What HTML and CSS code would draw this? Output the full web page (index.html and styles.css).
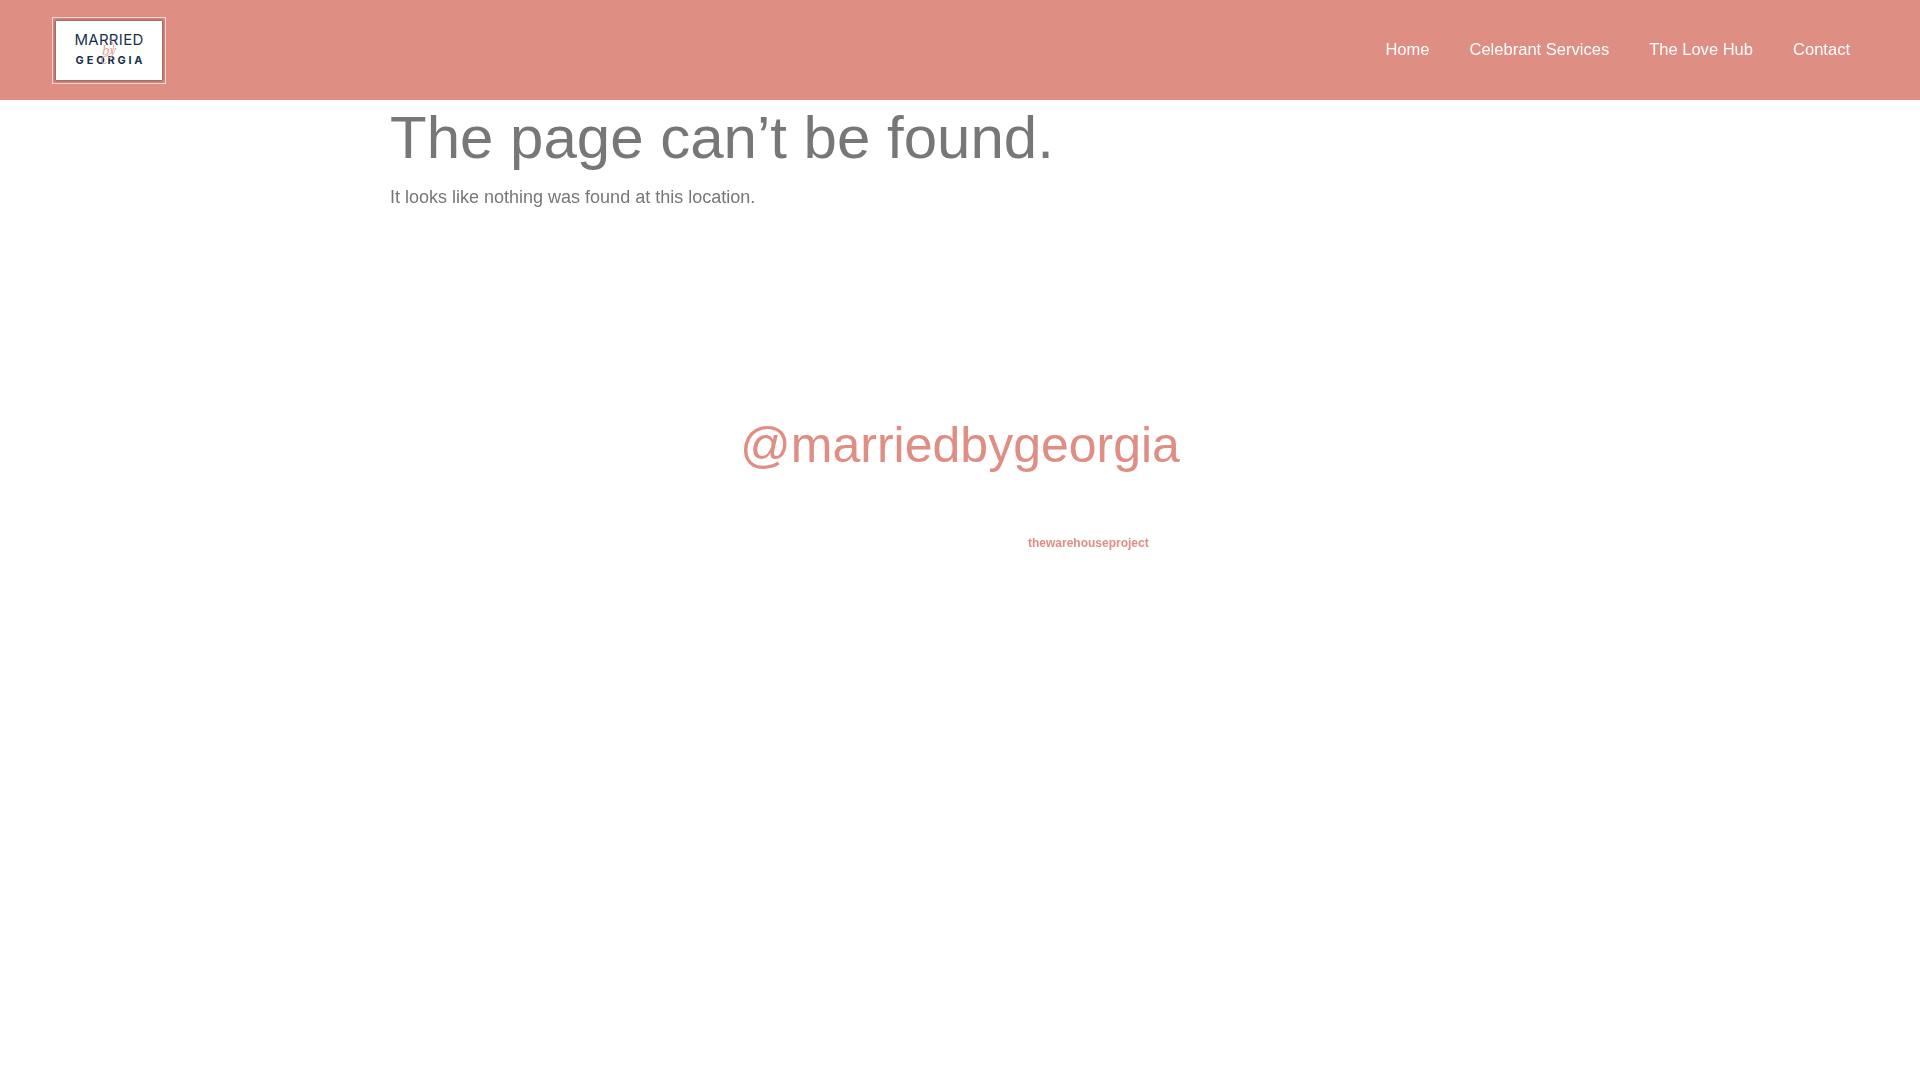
FILE: index.html
```html
<!DOCTYPE html>
<html lang="en">
<head>
<meta charset="utf-8">
<title>Page not found</title>
<link rel="stylesheet" href="styles.css">
</head>
<body>
<header class="site-header">
  <a class="logo" href="#">
    <span class="logo-card">
      <span class="logo-top">MARRIED</span>
      <span class="logo-bottom">GEORGIA</span>
      <span class="logo-by">by</span>
      <svg class="logo-swash" viewBox="0 0 24 28" width="24" height="28" aria-hidden="true">
        <path d="M14 1C19 4 20 11 16 15C14 17 12 18 11 18C8 18 6 21 7 24C8 26 11 26 12 24" fill="none" stroke="#e8a399" stroke-width="1"/>
      </svg>
    </span>
  </a>
  <nav class="nav">
    <a href="#">Home</a>
    <a href="#">Celebrant Services</a>
    <a href="#">The Love Hub</a>
    <a href="#">Contact</a>
  </nav>
</header>
<main class="content">
  <h1 class="title">The page can’t be found.</h1>
  <p class="lead">It looks like nothing was found at this location.</p>
</main>
<section class="insta">
  <h2 class="handle">@marriedbygeorgia</h2>
  <a class="credit" href="#">thewarehouseproject</a>
</section>
</body>
</html>
```
FILE: styles.css
```css
* { box-sizing: border-box; }
html, body { margin: 0; padding: 0; }
body {
  background: #fff;
  font-family: "Liberation Sans", Arial, sans-serif;
  min-height: 1080px;
}
a { text-decoration: none; }
.site-header {
  height: 100px;
  background: #df8e84;
  display: flex;
  align-items: center;
  justify-content: space-between;
  padding: 0 70px 0 52px;
}
.logo {
  display: block;
  width: 114px;
  height: 67px;
  padding: 3px;
  border: 1px solid #f6dcd8;
}
.logo-card {
  position: relative;
  display: flex;
  flex-direction: column;
  align-items: center;
  height: 100%;
  background: #fff;
  box-shadow: 0 0 3px 1px rgba(90, 50, 50, .6);
  color: #17324a;
  font-family: "Inter", sans-serif;
  padding-top: 11px;
}
.logo-top { font-size: 15px; line-height: 15px; letter-spacing: .3px; }
.logo-bottom { font-size: 11px; line-height: 12px; font-weight: 700; letter-spacing: 2.8px; margin-top: 7px; margin-right: -3px; }
.logo-by {
  position: absolute;
  left: 46px;
  top: 21px;
  color: #e8a399;
  font-family: "Liberation Serif", serif;
  font-style: italic;
  font-size: 15px;
  line-height: 16px;
}
.logo-swash { position: absolute; left: 39px; top: 17px; }
.nav { display: flex; gap: 40px; padding-bottom: 1px; }
.nav a { color: #fff; font-size: 16.55px; line-height: 20px; will-change: opacity; }
.content { width: 1140px; margin: 0 auto; will-change: opacity; }
.title {
  margin: 0;
  color: #777;
  font-weight: 400;
  font-size: 60px;
  line-height: 72px;
  padding-top: 2px;
}
.lead {
  margin: 10px 0 0;
  color: #777;
  font-size: 18px;
  line-height: 27px;
}
.insta {
  display: flex;
  flex-direction: column;
  will-change: opacity;
}
.handle {
  margin: 204px 0 0;
  text-align: center;
  color: #e08e84;
  font-weight: 400;
  font-size: 50px;
  line-height: 60px;
}
.credit {
  align-self: flex-start;
  margin: 61px 0 0 1028px;
  color: #e08e84;
  font-weight: 700;
  font-size: 12px;
  line-height: 14px;
}
```
